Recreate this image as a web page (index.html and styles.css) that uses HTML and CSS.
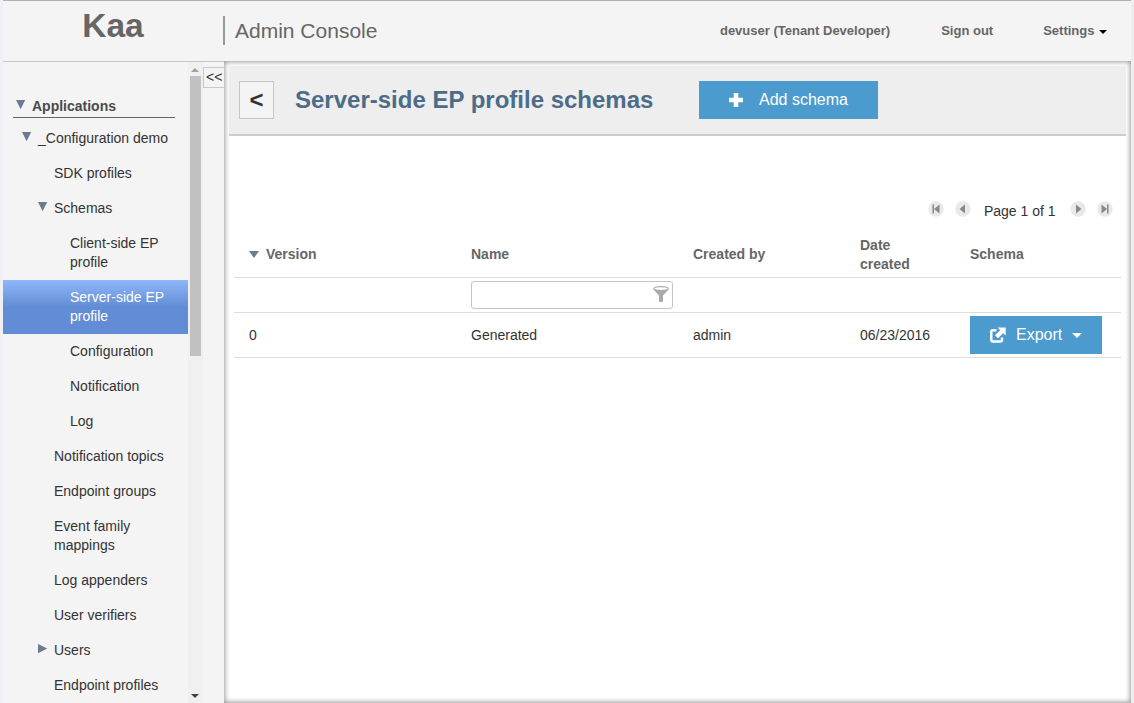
FILE: index.html
```html
<!DOCTYPE html>
<html lang="en">
<head>
<meta charset="utf-8">
<title>Kaa Admin Console</title>
<link rel="stylesheet" href="styles.css">
</head>
<body>
<div class="app">
  <header class="topbar">
    <div class="logo">Kaa</div>
    <div class="product">Admin Console</div>
    <nav class="links">
      <span class="user">devuser (Tenant Developer)</span>
      <span class="signout">Sign out</span>
      <span class="settings">Settings<i class="caret"></i></span>
    </nav>
  </header>
  <div class="body">
    <aside class="sidebar">
      <ul class="tree">
        <li class="root"><svg class="arrow" viewBox="0 0 10 10"><path d="M0 0H9.200L4.600 9.200Z"/></svg>Applications</li>
        <li class="item l1"><svg class="arrow" viewBox="0 0 10 10"><path d="M0 0H9.200L4.600 9.200Z"/></svg>_Configuration demo</li>
        <li class="item l2">SDK profiles</li>
        <li class="item l2"><svg class="arrow" viewBox="0 0 10 10"><path d="M0 0H9.200L4.600 9.200Z"/></svg>Schemas</li>
        <li class="item l3">Client-side EP profile</li>
        <li class="item l3 selected">Server-side EP profile</li>
        <li class="item l3">Configuration</li>
        <li class="item l3">Notification</li>
        <li class="item l3">Log</li>
        <li class="item l2">Notification topics</li>
        <li class="item l2">Endpoint groups</li>
        <li class="item l2">Event family mappings</li>
        <li class="item l2">Log appenders</li>
        <li class="item l2">User verifiers</li>
        <li class="item l2"><svg class="arrow" viewBox="0 0 10 10"><path d="M0 0V9.200L9.200 4.600Z"/></svg>Users</li>
        <li class="item l2">Endpoint profiles</li>
      </ul>
      <div class="scrollbar">
        <svg class="up" viewBox="0 0 8 4"><path d="M4 0L8 4H0Z"/></svg>
        <div class="thumb"></div>
        <svg class="down" viewBox="0 0 8 4"><path d="M0 0H8L4 4Z"/></svg>
      </div>
      <div class="collapse">&lt;&lt;</div>
    </aside>
    <main class="panel">
      <div class="titlebar">
        <div class="back">&lt;</div>
        <h1>Server-side EP profile schemas</h1>
        <div class="button add">
          <svg viewBox="0 0 14 14"><path d="M4.700 0H9.300V4.700H14V9.300H9.300V14H4.700V9.300H0V4.700H4.700Z"/></svg>
          <span>Add schema</span>
        </div>
      </div>
      <div class="pager">
        <svg viewBox="0 0 16 16"><circle cx="8" cy="8" r="7.700"/><path d="M4.500 3.500H6V12.500H4.500ZM11.500 3.500V12.500L6 8Z"/></svg>
        <svg viewBox="0 0 16 16"><circle cx="8" cy="8" r="7.700"/><path d="M10 3.500V12.500L4.500 8Z"/></svg>
        <span>Page 1 of 1</span>
        <svg viewBox="0 0 16 16"><circle cx="8" cy="8" r="7.700"/><path d="M6 3.500V12.500L11.500 8Z"/></svg>
        <svg viewBox="0 0 16 16"><circle cx="8" cy="8" r="7.700"/><path d="M4.500 3.500V12.500L10 8ZM10 3.500H11.500V12.500H10Z"/></svg>
      </div>
      <div class="grid">
        <div class="row head">
          <div class="sorted"><svg viewBox="0 0 10 7"><path d="M0 0H10L5 7Z"/></svg>Version</div>
          <div>Name</div>
          <div>Created by</div>
          <div class="date">Date created</div>
          <div>Schema</div>
        </div>
        <div class="row filter">
          <div></div>
          <div class="field">
            <svg viewBox="0 0 16 16"><path d="M0 3L6 9.500V15.500Q8 16.500 10 15.500V9.500L16 3Q16 0 8 0Q0 0 0 3Z"/><ellipse class="rim" cx="8" cy="2.600" rx="6.800" ry="1.400"/></svg>
          </div>
        </div>
        <div class="row data">
          <div>0</div>
          <div>Generated</div>
          <div>admin</div>
          <div>06/23/2016</div>
          <div class="button export">
            <svg viewBox="0 0 16 16"><path d="M6.500 3.300H2.500Q1.300 3.300 1.300 4.500V13.300Q1.300 14.500 2.500 14.500H10.800Q12 14.500 12 13.300V10.500" class="frame"/><path d="M7.500 0.500H15.700V8.500L13.200 6.200L8 11.200L5 8.200L10.200 3.200Z"/></svg>
            <span>Export</span>
            <i class="caret"></i>
          </div>
        </div>
      </div>
    </main>
  </div>
</div>
</body>
</html>
```

FILE: styles.css
```css
* { box-sizing: border-box; }
body {
  margin: 0;
  height: 703px;
  overflow: hidden;
  padding: 0 3px;
  background: linear-gradient(90deg, #eef0f4 50%, #eeeeee 50%);
  font: 14px/19px "Liberation Sans", Arial, sans-serif;
  color: #333;
}
.app { display: flex; flex-direction: column; height: 703px; background: #f4f4f4; }
.topbar {
  height: 62px;
  flex: none;
  display: flex;
  border-top: 1px solid #b0b0b0;
  border-bottom: 1px solid #c8c8c8;
  color: #666;
}
.logo { width: 220px; text-align: center; font-size: 33.5px; line-height: 49px; font-weight: bold; }
.product {
  height: 29px;
  margin-top: 15px;
  padding-left: 10px;
  border-left: 2px solid #999;
  font-size: 21px;
  line-height: 29px;
}
.links { display: flex; margin-left: auto; padding-right: 24.5px; font-size: 13px; line-height: 59px; font-weight: bold; }
.signout { margin: 0 50px 0 51px; }
.caret { display: inline-block; border: 4px solid transparent; border-top-color: #000; border-bottom: 0; vertical-align: middle; margin-left: 4px; }

.body { flex: 1; display: flex; min-height: 0; }
.sidebar { width: 221px; flex: none; display: flex; }
.tree { list-style: none; width: 185px; margin: 0; padding: 35px 0 0; }
.root { height: 21px; margin: 0 10px 3px 10px; padding-left: 3px; border-bottom: 1px solid #666; font-weight: bold; line-height: 18px; color: #4b4b4b; }
.root { margin-right: 13px; }
.arrow { width: 10px; height: 10px; fill: #6c7b8e; }
.root .arrow { margin: 0 6px 1px 0; }
.item { padding: 8px 16px 8px 0; }
.item .arrow { margin: 0 6px 1px -16px; }
.l1 { padding-left: 35px; padding-right: 0; }
.l2 { padding-left: 51px; }
.l3 { padding-left: 67px; }
.selected { color: #fff; background: linear-gradient(#90b7f9, #628cd5 50%); }
.scrollbar { width: 15px; padding-right: 1px; display: flex; flex-direction: column; align-items: center; background: #f0f0f0; }
.scrollbar svg { width: 8px; height: 4px; flex: none; }
.up { margin: 6px 0 4px; fill: #a0a0a0; }
.down { margin: auto 0 5px; fill: #404040; }
.thumb { width: 11px; height: 280px; margin-left: 1px; background: #c1c1c1; }
.collapse { width: 21px; height: 21px; margin-top: 5px; padding-left: 2px; border: 1px solid #c8c8c8; border-right: 0; line-height: 18px; }

.panel {
  flex: 1;
  margin-top: -1px;
  padding: 5px 5px 0;
  background: #fff;
  box-shadow: inset 0 0 5px 1px #999;
}
.titlebar { height: 70px; display: flex; padding: 15px 0 0 10px; background: #eee; border-bottom: 2px solid #ccc; }
.back { width: 35px; height: 38px; border: 1px solid #c6c6c6; background: #f4f4f4; text-align: center; font-size: 24px; line-height: 36px; font-weight: bold; }
h1 { width: 404px; margin: 0 0 0 21px; font-size: 24px; line-height: 37px; color: #4c6c88; }
.button { height: 38px; display: flex; align-items: center; background: #4b9bce; color: #fff; font-size: 16px; fill: #fff; }
.button span { padding-bottom: 2px; }
.add { width: 179px; padding-left: 30px; }
.add svg { width: 14px; height: 14px; margin-right: 16px; }
.pager { height: 16px; margin: 65px 13.500px 0 0; display: flex; justify-content: flex-end; align-items: center; }
.pager svg { width: 16px; height: 16px; fill: #888; margin-left: 11px; }
.pager circle { fill: #e9e9e9; }
.pager span { margin: 4px 3px 0 13px; }
.grid { margin: 13px 5px 0; }
.row { display: grid; grid-template-columns: 222px 222px 167px 110px 1fr; align-items: center; padding-left: 15px; border-bottom: 1px solid #ddd; }
.head { height: 48px; padding-top: 2px; font-weight: bold; color: #666; }
.sorted svg { width: 10px; height: 7px; margin: 0 7px 1px 0; fill: #6c7b8e; }
.date { width: 60px; }
.filter { height: 35px; }
.field { width: 202px; height: 28px; display: flex; justify-content: flex-end; padding: 4px 3px; border: 1px solid #c5c5c5; border-radius: 3px; }
.field svg { width: 16px; height: 16px; fill: #aaa; }
.field .rim { fill: #fff; }
.data { height: 45px; }
.export { width: 132px; padding-left: 20px; }
.export svg { width: 16px; height: 16px; margin-right: 10px; }
.export .frame { fill: none; stroke: #fff; stroke-width: 2.400; }
.export .caret { border-width: 5px 5px 0; border-top-color: #fff; margin-left: 10px; }
```
